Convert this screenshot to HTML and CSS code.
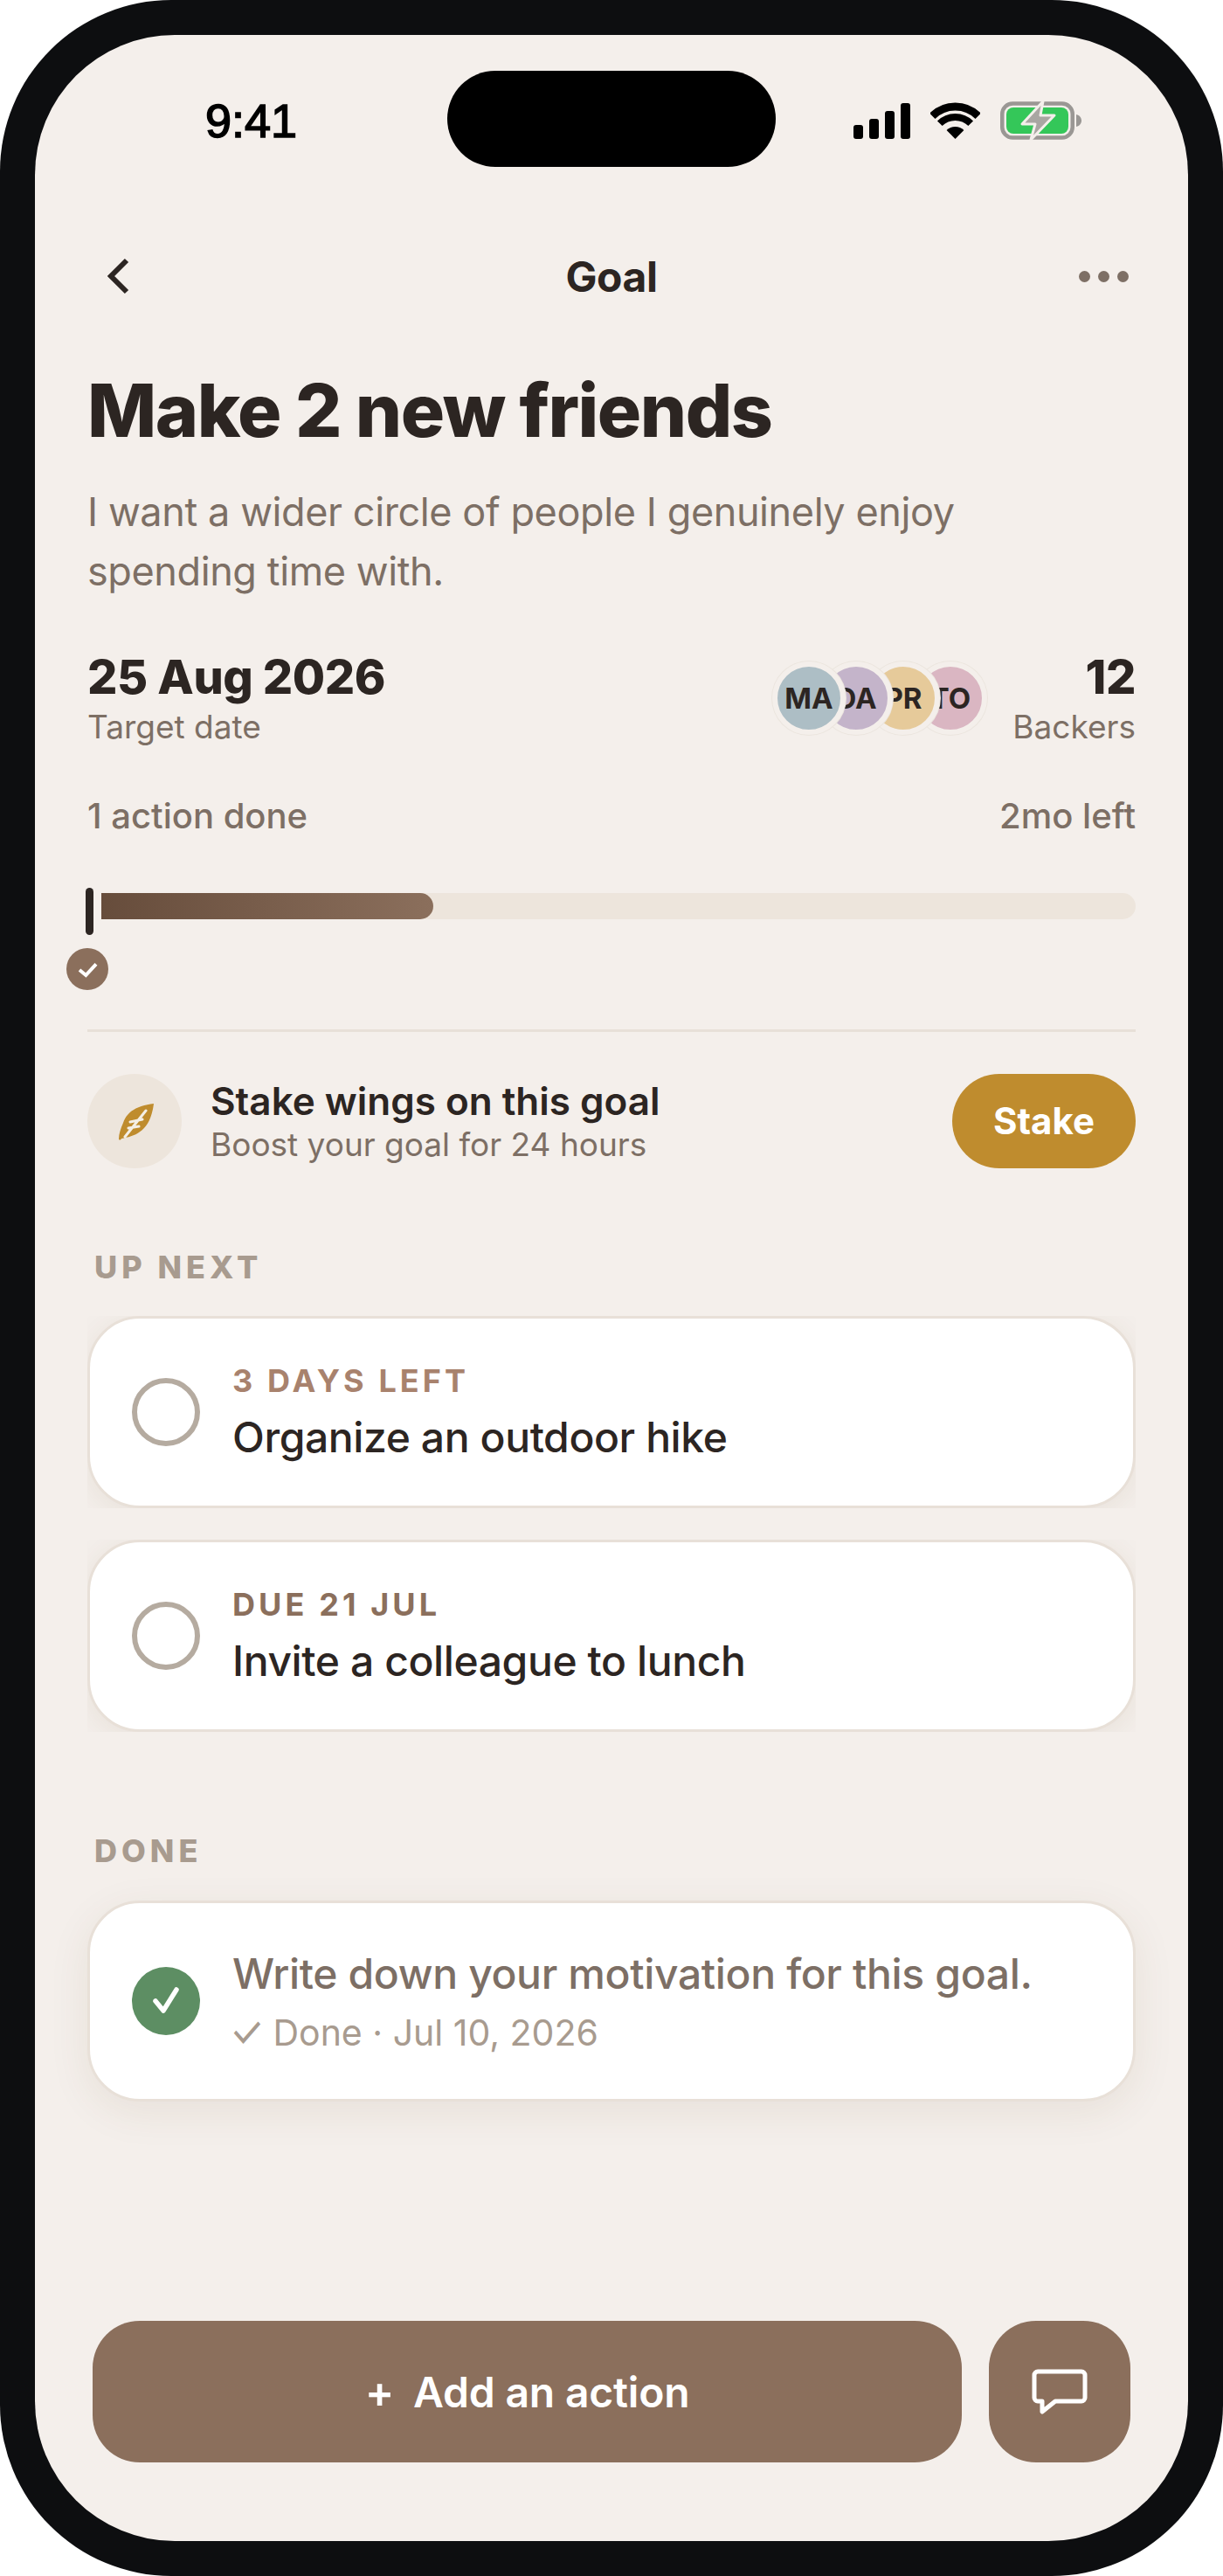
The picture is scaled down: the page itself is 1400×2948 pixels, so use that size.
FILE: index.html
```html
<!DOCTYPE html>
<html lang="en">
<head>
  <meta charset="UTF-8">
  <meta name="viewport" content="width=device-width, initial-scale=1.0">
  <title>Goal</title>
  <link rel="stylesheet" href="styles.css">
</head>
<body>
  <div class="phone">
    <div class="screen">
      <div class="island"></div>

      <div class="status">
        <span class="time">9:41</span>
        <div class="status-icons">
          <svg class="signal" width="65" height="41" viewBox="0 0 65 41">
            <rect x="0" y="25" width="11" height="16" rx="3"/>
            <rect x="18" y="18" width="11" height="23" rx="3"/>
            <rect x="36" y="9" width="11" height="32" rx="3"/>
            <rect x="54" y="0" width="11" height="41" rx="3"/>
          </svg>
          <svg class="wifi" width="57" height="42" viewBox="0 0 57 42">
            <path d="M2.3 15.8A37 37 0 0 1 54.7 15.8" fill="none" stroke="#000" stroke-width="9"/>
            <path d="M10.8 24.3A25 25 0 0 1 46.2 24.3" fill="none" stroke="#000" stroke-width="8"/>
            <path d="M28.5 42L18.6 32.1A14 14 0 0 1 38.4 32.1Z"/>
          </svg>
          <svg class="battery" width="93" height="48" viewBox="0 0 93 48">
            <rect x="2.25" y="4.5" width="80.5" height="39" rx="12" fill="none" stroke="#9a9794" stroke-width="4.5"/>
            <rect x="7" y="9" width="71" height="30" rx="8" fill="#34c759"/>
            <path d="M87 17c4 1 6 4 6 7s-2 6-6 7z" fill="#9a9794"/>
            <path d="M49 2L25 28H40L35 46L62 18H46Z" fill="#a9a6a2" stroke="#f4efeb" stroke-width="3" stroke-linejoin="round"/>
          </svg>
        </div>
      </div>

      <header class="nav">
        <svg class="back" width="30" height="42" viewBox="0 0 30 42">
          <path d="M25 3L7 21L25 39" fill="none" stroke="#2c2522" stroke-width="6"/>
        </svg>
        <span class="nav-title">Goal</span>
        <div class="more"><i></i><i></i><i></i></div>
      </header>

      <main class="content">
        <h1>Make 2 new friends</h1>
        <p class="desc">I want a wider circle of people I genuinely enjoy spending time with.</p>

        <div class="meta">
          <div>
            <div class="meta-value">25 Aug 2026</div>
            <div class="meta-label">Target date</div>
          </div>
          <div class="backers">
            <div class="avatars">
              <span class="avatar a1">MA</span>
              <span class="avatar a2">DA</span>
              <span class="avatar a3">PR</span>
              <span class="avatar a4">TO</span>
            </div>
            <div class="backers-count">
              <div class="meta-value">12</div>
              <div class="meta-label">Backers</div>
            </div>
          </div>
        </div>

        <div class="progress-labels">
          <span>1 action done</span>
          <span>2mo left</span>
        </div>

        <div class="track">
          <div class="fill" style="width: 33%"></div>
          <div class="tick"></div>
          <div class="tick-check">
            <svg width="48" height="48" viewBox="0 0 48 48">
              <path d="M15 25L22.3 31L34 18.3" fill="none" stroke="#fff" stroke-width="4"/>
            </svg>
          </div>
        </div>

        <div class="divider"></div>

        <div class="stake">
          <div class="stake-icon">
            <svg width="60" height="60" viewBox="0 0 60 60">
              <path d="M52 10C36 12 22 17 17 32C14 39 12 45 12 50C12 52 14 52 15 50C31 47 48 42 52 10Z" fill="#bf8c2e"/>
              <path d="M43 18L19 48M25 31L39 28M23 38L35 36" fill="none" stroke="#f4efe6" stroke-width="3" stroke-linecap="round"/>
            </svg>
          </div>
          <div class="stake-text">
            <div class="stake-title">Stake wings on this goal</div>
            <div class="stake-sub">Boost your goal for 24 hours</div>
          </div>
          <button class="stake-btn">Stake</button>
        </div>

        <div class="section-label up-next">UP NEXT</div>

        <div class="card-list">
          <div class="card-clip">
            <div class="card">
              <span class="radio"></span>
              <div class="card-text">
                <div class="eyebrow soon">3 DAYS LEFT</div>
                <div class="card-title">Organize an outdoor hike</div>
              </div>
            </div>
          </div>
          <div class="card-clip">
            <div class="card">
              <span class="radio"></span>
              <div class="card-text">
                <div class="eyebrow">DUE 21 JUL</div>
                <div class="card-title">Invite a colleague to lunch</div>
              </div>
            </div>
          </div>
        </div>

        <div class="section-label done-label">DONE</div>

        <div class="card done-card">
          <span class="done-check">
            <svg width="78" height="78" viewBox="0 0 78 78">
              <path d="M27 39L36 50L51 26" fill="none" stroke="#fff" stroke-width="5.5" stroke-linecap="round" stroke-linejoin="round"/>
            </svg>
          </span>
          <div class="card-text done-text">
            <div class="card-title">Write down your motivation for this goal.</div>
            <div class="done-sub"><span class="done-tick">✓</span> Done · Jul 10, 2026</div>
          </div>
        </div>
      </main>

      <footer class="actions">
        <button class="add-btn"><span class="plus">+</span> Add an action</button>
        <button class="chat-btn">
          <svg width="66" height="54" viewBox="0 0 66 54">
            <path d="M8 4H58A4 4 0 0 1 62 8V34A4 4 0 0 1 58 38H28L13 50V38H8A4 4 0 0 1 4 34V8A4 4 0 0 1 8 4Z" fill="none" stroke="#fff" stroke-width="5" stroke-linejoin="round"/>
          </svg>
        </button>
      </footer>
    </div>
  </div>
</body>
</html>
```

FILE: styles.css
```css
* {
  box-sizing: border-box;
}

body {
  margin: 0;
  background: #fff;
  font-family: Inter, "Liberation Sans", sans-serif;
  color: #2c2522;
}

.phone {
  width: 1400px;
  height: 2948px;
  padding: 40px;
  background: #0d0e10;
  border-radius: 196px;
}

.screen {
  position: relative;
  display: flex;
  flex-direction: column;
  height: 100%;
  background: #f4efeb;
  border-radius: 160px;
  overflow: hidden;
}

.island {
  position: absolute;
  top: 41px;
  left: 472px;
  width: 376px;
  height: 110px;
  background: #000;
  border-radius: 55px;
}

.status {
  display: flex;
  align-items: center;
  justify-content: space-between;
  height: 116px;
  margin-top: 40px;
  margin-bottom: 40px;
  padding: 0 122px 0 195px;
}

.time {
  font-family: "Liberation Sans", Arial, sans-serif;
  font-size: 54px;
  color: #000;
  -webkit-text-stroke: 1.6px #000;
}

.status-icons {
  display: flex;
  align-items: center;
  gap: 23px;
}

.nav {
  display: grid;
  grid-template-columns: 1fr auto 1fr;
  align-items: center;
  height: 84px;
  margin-top: 38px;
  padding: 0 68px;
}

.back {
  margin-left: 12px;
}

.nav-title {
  font-size: 48px;
  font-weight: 700;
  letter-spacing: -0.5px;
}

.more {
  display: flex;
  justify-content: flex-end;
  gap: 9px;
}

.more i {
  width: 13px;
  height: 13px;
  border-radius: 50%;
  background: #7d6f65;
}

.content {
  padding: 0 60px;
}

h1 {
  margin: 61px 0 0;
  font-size: 84px;
  line-height: 102px;
  font-weight: 800;
  letter-spacing: -1.5px;
}

.desc {
  max-width: 1040px;
  margin: 31px 0 0;
  font-size: 45px;
  line-height: 68px;
  letter-spacing: -0.4px;
  color: #7d6f65;
}

.meta {
  display: flex;
  justify-content: space-between;
  margin-top: 55px;
}

.meta-value {
  font-size: 54px;
  line-height: 64px;
  font-weight: 800;
  letter-spacing: -0.4px;
}

.meta-label {
  margin-top: 0;
  font-size: 37px;
  line-height: 50px;
  color: #7d6f65;
}

.backers {
  display: flex;
  align-items: flex-start;
}

.backers-count {
  width: 170px;
  text-align: right;
}

.avatars {
  display: flex;
  margin-top: 14px;
}

.avatar {
  display: flex;
  align-items: center;
  justify-content: center;
  width: 84px;
  height: 84px;
  margin-left: -30px;
  border: 6px solid #f4efeb;
  border-radius: 50%;
  box-shadow: 0 0 0 1px #ebe5de;
  font-size: 33px;
  font-weight: 700;
}

.a1 {
  z-index: 4;
  margin-left: 0;
  background: #adbec5;
}

.a2 {
  z-index: 3;
  background: #c4b4ca;
}

.a3 {
  z-index: 2;
  background: #e6ca9a;
}

.a4 {
  z-index: 1;
  background: #dab6c2;
}

.progress-labels {
  display: flex;
  justify-content: space-between;
  margin-top: 52px;
  font-size: 40px;
  line-height: 50px;
  font-weight: 550;
  color: #7d6f65;
}

.track {
  position: relative;
  height: 30px;
  margin-top: 63px;
  background: #ede5dc;
  border-radius: 15px;
}

.fill {
  height: 100%;
  background: linear-gradient(90deg, #654b3a, #8b6f5c);
  border-radius: 15px;
}

.tick {
  position: absolute;
  top: -6px;
  left: -2px;
  width: 9px;
  height: 54px;
  background: #2c2522;
  border-radius: 5px;
  box-shadow: 0 0 0 9px #f4efeb;
}

.tick-check {
  position: absolute;
  top: 63px;
  left: -24px;
  width: 48px;
  height: 48px;
  background: #8b6f5c;
  border-radius: 50%;
}

.divider {
  height: 3px;
  margin-top: 126px;
  background: #e8e0d8;
}

.stake {
  display: flex;
  align-items: center;
  margin-top: 48px;
}

.stake-icon {
  display: flex;
  align-items: center;
  justify-content: center;
  width: 108px;
  height: 108px;
  background: #ede5dc;
  border-radius: 50%;
}

.stake-text {
  flex: 1;
  margin-left: 33px;
}

.stake-title {
  font-size: 44px;
  line-height: 52px;
  font-weight: 600;
}

.stake-sub {
  margin-top: 1px;
  font-size: 37px;
  line-height: 46px;
  color: #7d6f65;
}

.stake-btn {
  width: 210px;
  height: 108px;
  padding-bottom: 2px;
  border: none;
  border-radius: 54px;
  background: #bf8c2e;
  color: #fff;
  font-family: inherit;
  font-size: 42px;
  font-weight: 700;
}

.section-label {
  padding-left: 8px;
  font-size: 36px;
  line-height: 50px;
  font-weight: 800;
  letter-spacing: 5px;
  color: #a89b8f;
}

.up-next {
  margin-top: 88px;
}

.done-label {
  margin-top: 111px;
}

.card-list {
  display: flex;
  flex-direction: column;
  gap: 36px;
  margin-top: 31px;
}

.card-clip {
  overflow: hidden;
}

.card {
  display: flex;
  align-items: center;
  height: 220px;
  padding-left: 48px;
  background: #fff;
  border: 3px solid #e8e0d8;
  border-radius: 60px;
  box-shadow: 0 6px 36px rgba(90, 60, 30, 0.08);
}

.radio {
  flex: none;
  width: 78px;
  height: 78px;
  border: 6px solid #b5aba0;
  border-radius: 50%;
}

.card-text {
  margin-left: 37px;
}

.eyebrow {
  font-size: 36px;
  line-height: 48px;
  font-weight: 700;
  letter-spacing: 4.1px;
  color: #8b6f5c;
}

.eyebrow.soon {
  color: #a8826d;
}

.card-title {
  margin-top: 9px;
  font-size: 48px;
  line-height: 64px;
  font-weight: 500;
  letter-spacing: -0.4px;
}

.done-card {
  height: 230px;
  margin-top: 32px;
  box-shadow: 0 12px 48px rgba(90, 60, 30, 0.08);
}

.done-check {
  flex: none;
  width: 78px;
  height: 78px;
  background: #5d8e63;
  border-radius: 50%;
}

.done-text .card-title {
  margin-top: 0;
  letter-spacing: -0.35px;
  color: #7d6f65;
}

.done-sub {
  margin-top: 7px;
  font-size: 41px;
  line-height: 56px;
  color: #a89b8f;
}

.done-tick {
  display: inline-block;
  margin: 0 -1px 0 -3px;
  font-size: 44px;
  line-height: 0;
  transform: scaleY(1.15);
}

.actions {
  display: flex;
  gap: 31px;
  margin-top: auto;
  padding: 0 66px 90px;
}

.add-btn {
  display: flex;
  flex: 1;
  align-items: center;
  justify-content: center;
  gap: 22px;
  height: 162px;
  border: none;
  border-radius: 54px;
  background: #8b6f5c;
  color: #fff;
  font-family: inherit;
  font-size: 48px;
  font-weight: 600;
  letter-spacing: -0.2px;
}

.plus {
  font-size: 50px;
  font-weight: 600;
}

.chat-btn {
  display: flex;
  align-items: center;
  justify-content: center;
  width: 162px;
  height: 162px;
  border: none;
  border-radius: 54px;
  background: #8b6f5c;
}
```
